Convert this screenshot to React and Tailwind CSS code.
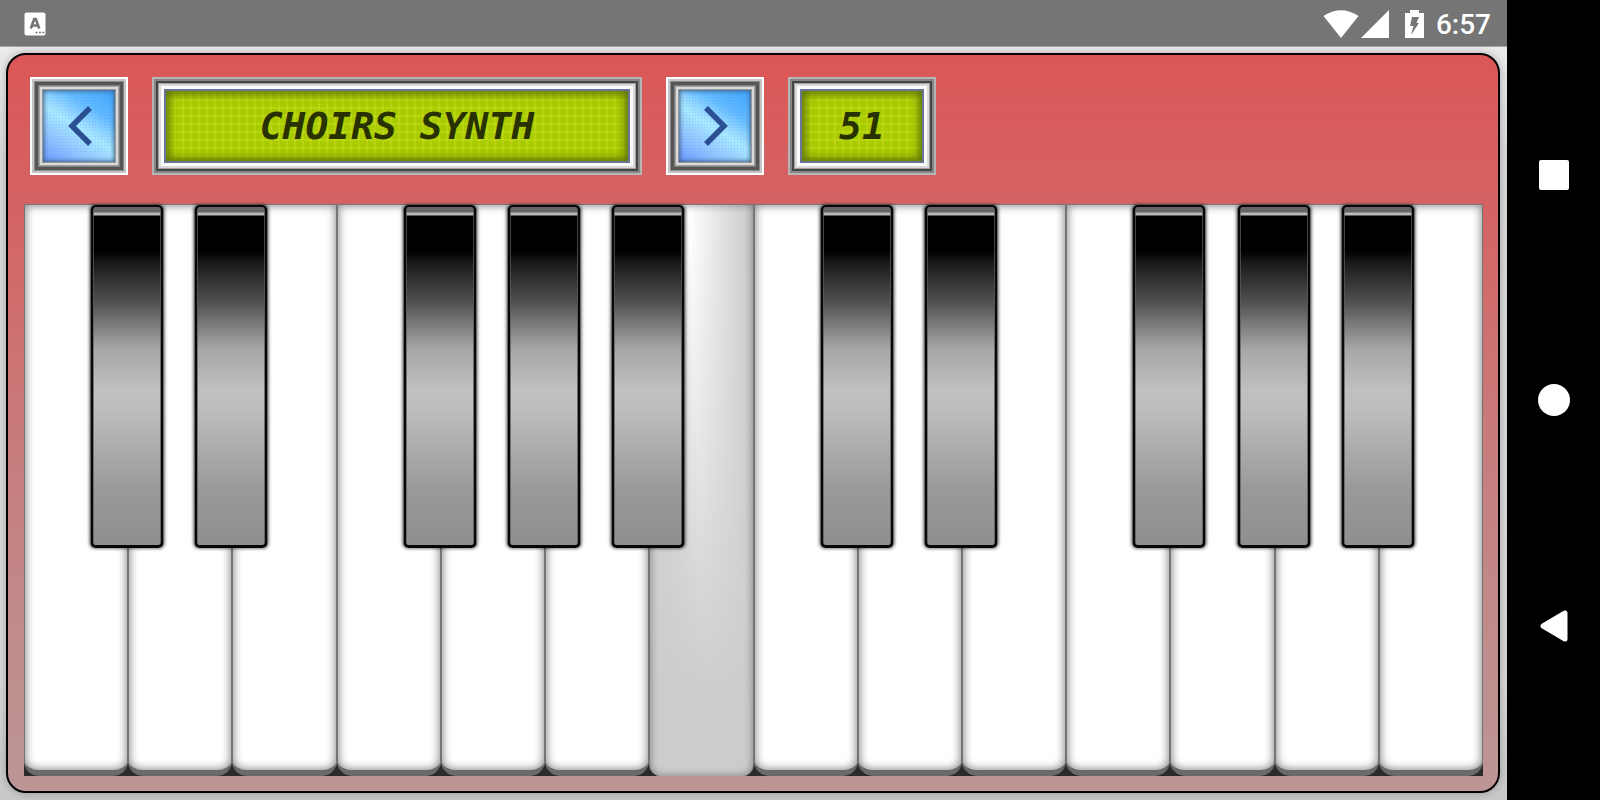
const WHITE_KEYS = [
  { note: 'C4', sharp: true },
  { note: 'D4', sharp: true },
  { note: 'E4' },
  { note: 'F4', sharp: true },
  { note: 'G4', sharp: true },
  { note: 'A4', sharp: true },
  { note: 'B4', pressed: true },
  { note: 'C5', sharp: true },
  { note: 'D5', sharp: true },
  { note: 'E5' },
  { note: 'F5', sharp: true },
  { note: 'G5', sharp: true },
  { note: 'A5', sharp: true },
  { note: 'B5' },
];

function StatusBar() {
  return (
    <header className="flex h-[46px] shrink-0 items-center bg-[#757575] pt-0.5 pr-4 pl-6 text-white">
      <svg width="22" height="24" viewBox="0 0 22 24" aria-label="Keyboard">
        <rect x="0.5" y="0.5" width="21" height="23" rx="2" fill="#fff" />
        <path d="M6.8 16.500 L10.2 7 H11.8 L15.2 16.500 M8.5 13.500 H13.5" fill="none" stroke="#757575" strokeWidth="2.6" />
        <path d="M11.5 20.5 h2 M15 20.5 h2 M18.3 20.5 h2" stroke="#757575" strokeWidth="1.6" />
      </svg>
      <div className="ml-auto flex items-center">
        <svg width="36" height="28" viewBox="0 0 36 28" aria-label="Wi-Fi">
          <path d="M0.5 6 Q18 -5.5 35.5 6 L18 28 Z" fill="#fff" />
        </svg>
        <svg className="ml-0.5" width="28" height="28" viewBox="0 0 28 28" aria-label="Signal">
          <path d="M28 0 V28 H0 Z" fill="#fff" />
        </svg>
        <svg className="ml-4" width="19" height="28" viewBox="0 0 19 28" aria-label="Battery charging">
          <path d="M5 0 h9 v3 h5 v25 H0 V3 h5 Z" fill="#fff" />
          <path d="M7 7 h7 l-2.5 6 H14 L6 25 L8.500 16 H5 Z" fill="#757575" />
        </svg>
        <time className="ml-3 pt-0.5 font-[Roboto,sans-serif] text-[28px] leading-8 font-medium">6:57</time>
      </div>
    </header>
  );
}

function StepButton({ label, points }) {
  return (
    <button
      type="button"
      aria-label={label}
      className="flex size-[98px] shrink-0 bg-[#d9d9d9] p-[13px] shadow-[inset_0_0_0_2px_#fff,inset_0_0_0_4px_#c4c4c4,inset_0_0_0_5px_#8a8a8a,inset_0_0_0_8px_#555,inset_0_0_0_9px_#808080,inset_0_0_0_10px_#a0a0a0,inset_0_0_0_12px_#dadada,inset_0_0_0_13px_#999]"
    >
      <span className="flex flex-1 items-center justify-center self-stretch bg-[radial-gradient(#2b6cff30_1px,transparent_1px),linear-gradient(33deg,#6a98ff_0%,#90c4ff_25%,#a8e8ff_48%,#9cdcff_54%,#62baff_72%,#3fa4fc_100%)] bg-[size:3px_3px,100%_100%] shadow-[inset_0_0_4px_1px_#3f5f80]">
        <svg width="72" height="72" viewBox="0 0 72 72" fill="none" stroke="#2c4f94" strokeWidth="5.5">
          <polyline points={points} />
        </svg>
      </span>
    </button>
  );
}

function Lcd({ width, children }) {
  return (
    <div
      className={`${width} flex h-[98px] shrink bg-[#999] p-3 shadow-[inset_0_0_0_2px_#b5b5b5,inset_0_0_0_4px_#858585,inset_0_0_0_6px_#454545,inset_0_0_0_7px_#a0a0a0,inset_0_0_0_9px_#dadada,inset_0_0_0_12px_#fafafa]`}
    >
      <output className="flex min-w-0 flex-1 items-center justify-center overflow-hidden border-2 border-[#6a7498] bg-[#a8cc00] bg-[linear-gradient(#c6da2080_2px,transparent_2px),linear-gradient(90deg,#c6da2080_2px,transparent_2px)] bg-[size:8px_8px] font-['DejaVu_Sans_Mono','Liberation_Mono',monospace] text-[38px] leading-[48px] font-bold whitespace-nowrap text-[#283200] italic shadow-[inset_0_0_8px_3px_#5a7000]">
        {children}
      </output>
    </div>
  );
}

function BlackKey({ note }) {
  return (
    <button
      type="button"
      aria-label={note}
      className="absolute top-0 right-px z-10 h-[60%] w-[70%] translate-x-1/2 rounded-[5px] border-[3px] border-t-2 border-[#080808] bg-[linear-gradient(#666_0px,#666_5px,#b8b8b8_6px,#b8b8b8_8px,#000_9px,#000_13%,#1c1c1c_17%,#555_29%,#777_34%,#a6a6a6_42%,#c0c0c0_54%,#bdbdbd_60%,#999_84%,#8f8f8f_100%)] shadow-[0_0_3px_1px_#00000080]"
    />
  );
}

function WhiteKey({ note, sharp, pressed }) {
  return (
    <div className="relative flex flex-1">
      {pressed ? (
        <button
          type="button"
          aria-label={note}
          aria-pressed="true"
          className="flex-1 rounded-b-[12px] border-x border-[#777] bg-[linear-gradient(9deg,#ccc_0%,#ccc_15%,#cccccc00_95%),linear-gradient(88deg,#dcdcdc_20%,#fff_48%,#d6d6d6_85%,#c8c8c8_100%)] shadow-[inset_0_0_9px_#0006]"
        />
      ) : (
        <button
          type="button"
          aria-label={note}
          className="flex-1 rounded-b-[15px] border-x border-b-[6px] border-x-[#747474] border-b-[#6a6a6a] bg-white shadow-[inset_0_0_8px_1px_#0007]"
        />
      )}
      {sharp && <BlackKey note={`${note} sharp`} />}
    </div>
  );
}

function NavBar() {
  return (
    <nav className="flex w-[93px] shrink-0 flex-col items-center justify-between bg-black pt-40 pb-[158px]">
      <button type="button" aria-label="Recent apps">
        <svg width="30" height="30" viewBox="0 0 30 30">
          <rect width="30" height="30" rx="2" fill="#fff" />
        </svg>
      </button>
      <button type="button" aria-label="Home">
        <svg width="32" height="32" viewBox="0 0 32 32">
          <circle cx="16" cy="16" r="16" fill="#fff" />
        </svg>
      </button>
      <button type="button" aria-label="Back">
        <svg width="28" height="32" viewBox="0 0 28 32">
          <path d="M3 16 L25 3 V29 Z" fill="#fff" stroke="#fff" strokeWidth="5" strokeLinejoin="round" />
        </svg>
      </button>
    </nav>
  );
}

export default function App() {
  return (
    <div className="flex h-screen">
      <div className="flex min-w-0 flex-1 flex-col">
        <StatusBar />
        <main className="flex min-h-0 flex-1 bg-[linear-gradient(#ebebeb,#dadada_15%,#d8d8d8_85%,#c8c8c8)] p-[7px] pl-1.5 shadow-[inset_0_1px_#a5a5a5]">
          <div className="flex min-w-0 flex-1 flex-col rounded-[20px] border-2 border-black bg-[linear-gradient(#dc5757,#d46464_22%,#c97a7a_50%,#be8f8f_85%,#bc9594)] pt-[22px] pr-[15px] pb-[15px] pl-4 shadow-[0_0_8px_#0004]">
            {/* Instrument selector */}
            <div className="flex gap-6 px-1.5">
              <StepButton label="Previous instrument" points="47,18 29,36 47,54" />
              <Lcd width="w-[490px]">CHOIRS SYNTH</Lcd>
              <StepButton label="Next instrument" points="27,18 45,36 27,54" />
              <Lcd width="w-[148px]">51</Lcd>
            </div>

            {/* Keyboard */}
            <div className="mt-[29px] flex min-h-0 flex-1 border-t border-[#777] bg-[#2b2b2b]">
              {WHITE_KEYS.map((key) => (
                <WhiteKey key={key.note} {...key} />
              ))}
            </div>
          </div>
        </main>
      </div>
      <NavBar />
    </div>
  );
}
